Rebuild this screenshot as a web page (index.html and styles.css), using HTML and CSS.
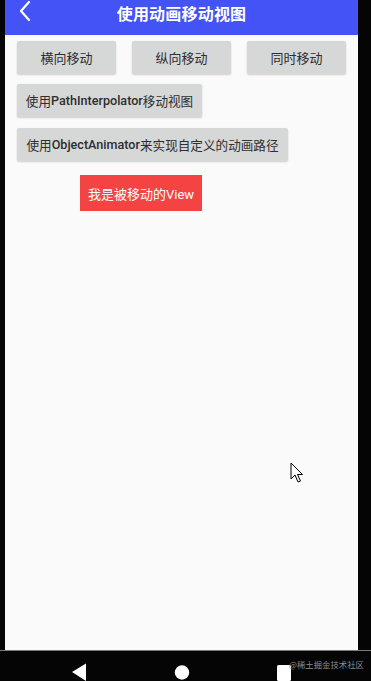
FILE: index.html
```html
<!DOCTYPE html>
<html lang="zh-CN">
<head>
<meta charset="utf-8">
<link rel="stylesheet" href="styles.css">
</head>
<body>
<div class="frame">
  <div class="screen">
    <header class="appbar">
      <svg class="back" width="14" height="22" viewBox="0 0 14 22"><path d="M11 2 L3 11 L11 20" fill="none" stroke="#fff" stroke-width="2.2" stroke-linecap="round" stroke-linejoin="round"/></svg>
      <h1 class="title">使用动画移动视图</h1>
    </header>
    <main class="content">
      <div class="row3">
        <div class="btn">横向移动</div>
        <div class="btn">纵向移动</div>
        <div class="btn">同时移动</div>
      </div>
      <div class="btn btn-auto r2">使用<span class="latin">PathInterpolator</span>移动视图</div>
      <div class="btn btn-auto r3">使用<span class="latin">ObjectAnimator</span>来实现自定义的动画路径</div>
      <div class="redbox">我是被移动的View</div>
    </main>
    <svg class="cursor" width="14" height="22" viewBox="0 0 14 22"><path d="M1 1 L1 17 L5 13 L8 20 L10.5 19 L7.5 12.5 L12.5 12.5 Z" fill="#fff" stroke="#000" stroke-width="1" stroke-linejoin="round"/></svg>
  </div>
  <div class="divider"></div>
  <nav class="navbar">
    <svg class="navicons" width="371" height="30" viewBox="0 0 371 30">
      <path d="M72 21 L86 12.5 L86 30 Z" fill="#fff"/>
      <circle cx="182" cy="21.5" r="7.2" fill="#fff"/>
      <rect x="277" y="14" width="14" height="16" rx="1.5" fill="#fff"/>
    </svg>
    <span class="watermark">@稀土掘金技术社区</span>
  </nav>
</div>
</body>
</html>
```
FILE: styles.css
```css
html, body {
  margin: 0;
  padding: 0;
  background: #000;
}
body {
  width: 371px;
  height: 681px;
  overflow: hidden;
  font-family: Roboto, "Noto Sans CJK SC", sans-serif;
}
.frame {
  width: 371px;
  height: 681px;
  background: #050505;
}
.screen {
  position: relative;
  margin-left: 5px;
  width: 353px;
  height: 650px;
  background: #fafafa;
  overflow: hidden;
}
.appbar {
  position: relative;
  height: 35px;
  background: #4353f5;
  display: flex;
  align-items: center;
  justify-content: center;
}
.back {
  position: absolute;
  left: 13px;
  top: 0px;
}
.title {
  margin: 0;
  color: #fff;
  font-size: 16px;
  font-weight: 700;
  font-family: Roboto, "Noto Sans CJK SC", sans-serif;
  margin-top: -10px;
  letter-spacing: 0.2px;
}
.content {
  padding: 6px 12px 0 12px;
  display: flex;
  flex-direction: column;
  align-items: flex-start;
}
.row3 {
  display: grid;
  grid-template-columns: repeat(3, 1fr);
  column-gap: 16px;
  width: 100%;
}
.btn {
  height: 33px;
  background: #d6d7d7;
  color: #2e2e2e;
  font-size: 13px;
  display: flex;
  align-items: center;
  justify-content: center;
  border-radius: 2px;
  box-shadow: 0 1px 2px rgba(0,0,0,0.18);
  box-sizing: border-box;
  white-space: nowrap;
}
.btn-auto {
  padding: 0;
  font-size: 12.6px;
}
.latin {
  font-weight: 500;
}
.r2 {
  margin-top: 10px;
  width: 185px;
}
.r3 {
  margin-top: 11px;
  width: 271px;
}
.redbox {
  margin-top: 14px;
  margin-left: 63px;
  width: 122px;
  height: 36px;
  background: #f44343;
  color: #fff;
  font-size: 13px;
  display: flex;
  align-items: center;
  justify-content: center;
  white-space: nowrap;
}
.cursor {
  position: absolute;
  left: 285px;
  top: 462px;
}
.divider {
  height: 1px;
  background: #7a7a7a;
}
.navbar {
  position: relative;
  height: 30px;
  background: #050505;
}
.navicons {
  display: block;
}
.watermark {
  position: absolute;
  left: 289px;
  top: 7px;
  font-size: 8.4px;
  color: #8c8c8c;
  font-family: "Noto Sans CJK SC", sans-serif;
  white-space: nowrap;
}
```
